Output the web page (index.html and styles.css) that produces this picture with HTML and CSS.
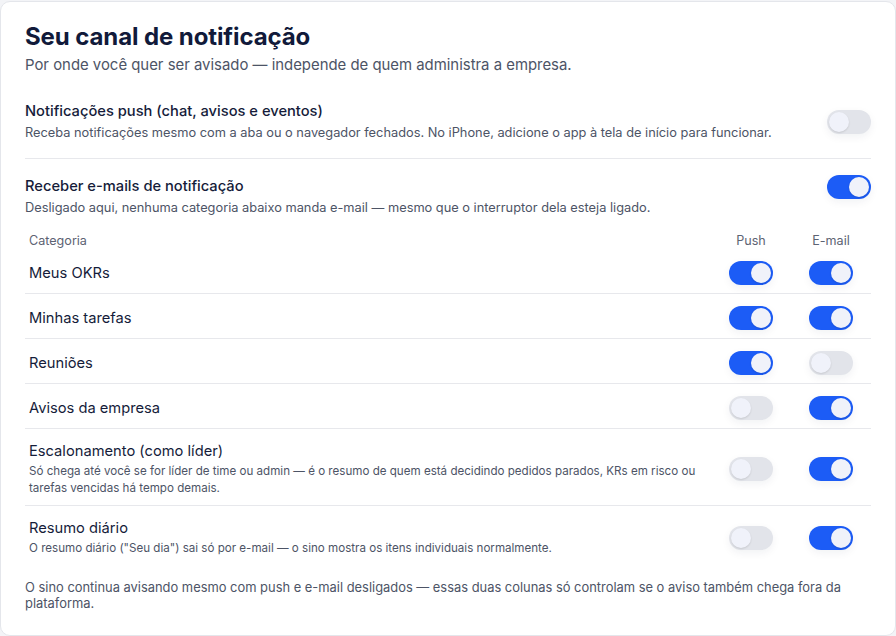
FILE: index.html
```html
<!DOCTYPE html>
<html lang="pt-BR">
<head>
    <meta charset="UTF-8">
    <meta name="viewport" content="width=device-width, initial-scale=1.0">
    <title>Seu canal de notificação</title>
    <link rel="stylesheet" href="styles.css">
</head>
<body>
    <div class="card">
        <div class="card-head">
            <h1>Seu canal de notificação</h1>
            <p class="sub">Por onde você quer ser avisado — independe de quem administra a empresa.</p>
        </div>

        <div class="section section-center">
            <div class="section-text">
                <div class="section-title">Notificações push (chat, avisos e eventos)</div>
                <div class="section-desc">Receba notificações mesmo com a aba ou o navegador fechados. No iPhone, adicione o app à tela de início para funcionar.</div>
            </div>
            <span class="toggle"></span>
        </div>

        <div class="section section-last">
            <div class="section-row">
                <div class="section-text">
                    <div class="section-title">Receber e-mails de notificação</div>
                    <div class="section-desc">Desligado aqui, nenhuma categoria abaixo manda e-mail — mesmo que o interruptor dela esteja ligado.</div>
                </div>
                <span class="toggle on"></span>
            </div>

            <div class="cat-table">
                <div class="cat-head">
                    <div>Categoria</div>
                    <div class="col">Push</div>
                    <div class="col">E-mail</div>
                </div>
                <div class="cat-row">
                    <div class="cat-name">Meus OKRs</div>
                    <div class="col"><span class="toggle on"></span></div>
                    <div class="col"><span class="toggle on"></span></div>
                </div>
                <div class="cat-row">
                    <div class="cat-name">Minhas tarefas</div>
                    <div class="col"><span class="toggle on"></span></div>
                    <div class="col"><span class="toggle on"></span></div>
                </div>
                <div class="cat-row">
                    <div class="cat-name">Reuniões</div>
                    <div class="col"><span class="toggle on"></span></div>
                    <div class="col"><span class="toggle"></span></div>
                </div>
                <div class="cat-row">
                    <div class="cat-name">Avisos da empresa</div>
                    <div class="col"><span class="toggle"></span></div>
                    <div class="col"><span class="toggle on"></span></div>
                </div>
                <div class="cat-row">
                    <div>
                        <div class="cat-name">Escalonamento (como líder)</div>
                        <div class="cat-desc">Só chega até você se for líder de time ou admin — é o resumo de quem está decidindo pedidos parados, KRs em risco ou tarefas vencidas há tempo demais.</div>
                    </div>
                    <div class="col"><span class="toggle"></span></div>
                    <div class="col"><span class="toggle on"></span></div>
                </div>
                <div class="cat-row">
                    <div>
                        <div class="cat-name">Resumo diário</div>
                        <div class="cat-desc">O resumo diário ("Seu dia") sai só por e-mail — o sino mostra os itens individuais normalmente.</div>
                    </div>
                    <div class="col"><span class="toggle"></span></div>
                    <div class="col"><span class="toggle on"></span></div>
                </div>
            </div>
        </div>

        <p class="note">O sino continua avisando mesmo com push e e-mail desligados — essas duas colunas só controlam se o aviso também chega fora da plataforma.</p>
    </div>
</body>
</html>
```

FILE: styles.css
```css
body {
    margin: 0;
    padding: 1px 0 0;
    background-color: #f3f4f7;
    font-family: Inter, "Open Sans", sans-serif;
    color: #1b2240;
}
.card {
    background: white;
    border: 1px solid #e4e6eb;
    border-radius: 10px;
    padding: 24px;
    height: 635px;
    box-sizing: border-box;
}
h1 {
    margin: -2px 0 0;
    font-size: 24px;
    line-height: 26px;
    font-weight: 700;
    color: #111a3a;
    letter-spacing: -0.1px;
}
.sub {
    margin: 5px 0 0;
    font-size: 14.9px;
    line-height: 20px;
    color: #4d5466;
}
.card-head {
    margin-bottom: 9px;
}
.section {
    padding: 17px 0 16px;
    border-bottom: 1px solid #e7e8ec;
}
.section-center {
    display: flex;
    align-items: center;
    justify-content: space-between;
}
.section-row {
    display: flex;
    align-items: flex-start;
    justify-content: space-between;
}
.section-row .toggle {
    margin-top: -1px;
}
.section-last {
    border-bottom: none;
    padding-bottom: 0;
}
.section-title {
    font-size: 14.7px;
    line-height: 20px;
    font-weight: 500;
    color: #151c3a;
}
.section-desc {
    margin-top: 3px;
    font-size: 12.8px;
    line-height: 18px;
    color: #4d5466;
}
.toggle {
    display: inline-block;
    position: relative;
    width: 44px;
    height: 24px;
    border-radius: 12px;
    background-color: #e2e4ea;
    box-shadow: 0 3px 8px rgba(20, 30, 60, 0.06);
    flex-shrink: 0;
}
.toggle::after {
    content: "";
    position: absolute;
    top: 2px;
    left: 2px;
    width: 20px;
    height: 20px;
    border-radius: 50%;
    background-color: #f0f2fa;
    box-shadow: 0 1px 2px rgba(0, 0, 0, 0.12);
}
.toggle.on {
    background-color: #1c5cf6;
}
.toggle.on::after {
    left: 22px;
}
.cat-table {
    margin-top: 16px;
}
.cat-head,
.cat-row {
    display: grid;
    grid-template-columns: 1fr 80px 80px;
    align-items: center;
}
.cat-head {
    font-size: 12.6px;
    line-height: 16px;
    color: #5d6373;
    padding: 0 0 0 4px;
}
.cat-row {
    padding: 12px 0 8px 4px;
    border-bottom: 1px solid #e7e8ec;
}
.cat-row:last-child {
    border-bottom: none;
}
.col {
    display: flex;
    justify-content: center;
}
.cat-name {
    font-size: 14.7px;
    line-height: 20px;
    color: #151c3a;
}
.cat-desc {
    margin-top: 2px;
    font-size: 11.6px;
    line-height: 17px;
    color: #4d5466;
    padding-right: 6px;
}
.note {
    margin: 15px 0 0;
    font-size: 12.9px;
    line-height: 16px;
    color: #4d5466;
}
```
